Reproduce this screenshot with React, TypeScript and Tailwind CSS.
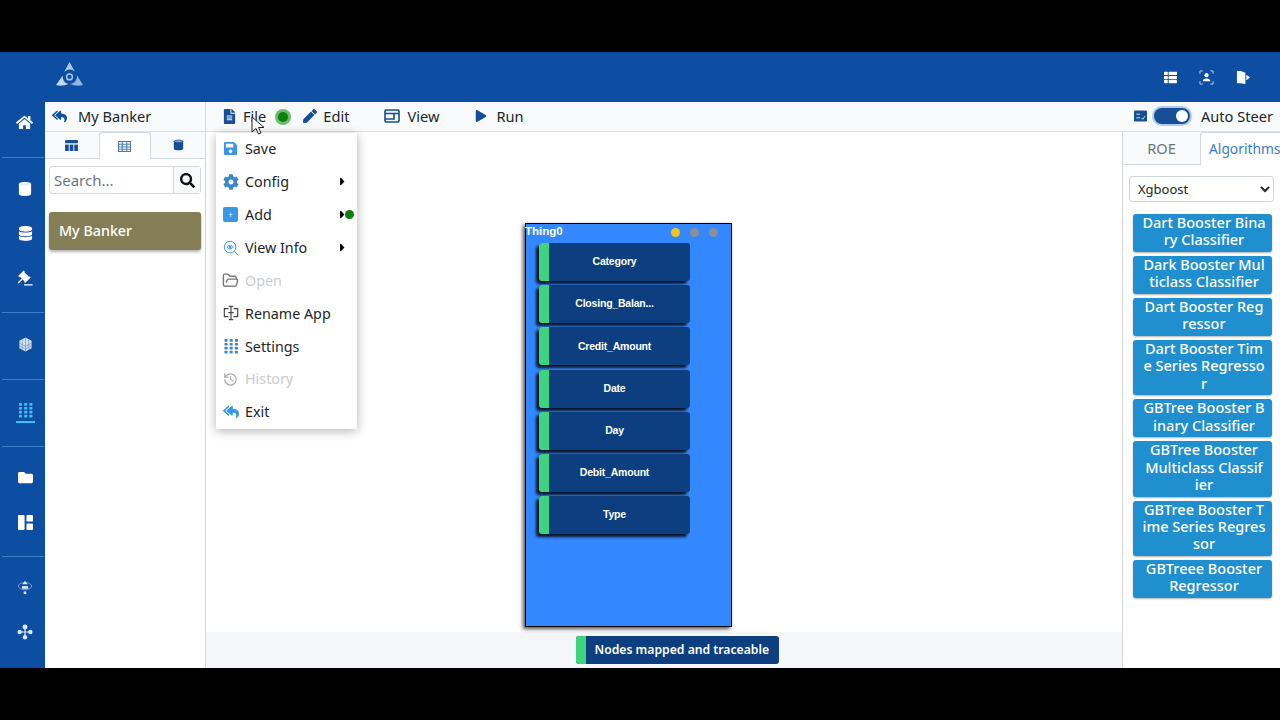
import React from 'react';
import { FaHome, FaDatabase, FaFolder, FaThList, FaFileAlt, FaPen, FaPlay, FaSave, FaCog, FaReplyAll, FaSearch, FaCaretRight } from 'react-icons/fa';
import { BsGrid1X2Fill } from 'react-icons/bs';
import { LuFolderOpen, LuHistory } from 'react-icons/lu';
import { RiAuctionFill } from 'react-icons/ri';

const fields = ['Category', 'Closing_Balan...', 'Credit_Amount', 'Date', 'Day', 'Debit_Amount', 'Type'];

// the wrap points of the reference fall mid word, so lines are listed as they appear
const algorithms = [
  ['Dart Booster Bina', 'ry Classifier'],
  ['Dark Booster Mul', 'ticlass Classifier'],
  ['Dart Booster Reg', 'ressor'],
  ['Dart Booster Tim', 'e Series Regresso', 'r'],
  ['GBTree Booster B', 'inary Classifier'],
  ['GBTree Booster', 'Multiclass Classif', 'ier'],
  ['GBTree Booster T', 'ime Series Regres', 'sor'],
  ['GBTreee Booster', 'Regressor'],
];

const Cylinder = ({ className, top = '#7fa3cf' }: { className?: string; top?: string }) => (
  <svg viewBox="0 0 16 18" className={className} fill="currentColor">
    <path d="M1 3.500C1 1.800 4.200 1 8 1s7 .8 7 2.500v11C15 16.200 11.800 17 8 17s-7-.8-7-2.500z" />
    <ellipse cx="8" cy="3.500" rx="5.500" ry="1.500" fill={top} />
  </svg>
);

const Logo = () => (
  <svg viewBox="0 0 30 26" className="h-[25px] w-[29px]">
    <path d="M15 0 L20.500 10 A7.500 7.500 0 0 0 8 13 Z" fill="#a9c8ea" />
    <path d="M21 11 L29 24 Q22 26 15 22.500 A7 7 0 0 0 21 11 Z" fill="#8fb6e2" />
    <path d="M8 14 A7.500 7.500 0 0 0 14 23 Q7 26 1 24 Z" fill="#c3d9f0" />
    <circle cx="15" cy="15.500" r="3" fill="none" stroke="#a9c8ea" strokeWidth="1.500" />
  </svg>
);

const CubeIcon = () => (
  <svg viewBox="0 0 16 16" className="h-[15px] w-[15px]" fill="#d5dfeb">
    <path d="M8 .5l6.500 3.500v8L8 15.500 1.500 12V4z" />
    <path d="M1.500 6.500L8 10l6.500-3.500M1.500 9.500L8 13l6.500-3.500M4.500 2.500v11M8 1v14M11.500 2.500v11" stroke="#6f8fb8" strokeWidth=".7" fill="none" />
  </svg>
);

const Dots = ({ className }: { className?: string }) => (
  <svg viewBox="0 0 15 15" className={className} fill="currentColor">
    {[0, 1, 2, 3].map(r =>
      [0, 1, 2].map(c => <rect key={`${r}-${c}`} x={c * 5.200 + 1} y={r * 3.900} width="3" height="2.700" rx=".5" />),
    )}
  </svg>
);

const ThreeDotFlow = ({ ring }: { ring?: boolean }) => (
  <svg viewBox="0 0 18 18" className="h-[16px] w-[16px]" fill="#dbe7f5">
    {ring ? (
      <>
        <ellipse cx="9" cy="8" rx="7.500" ry="4" fill="none" stroke="#7fa8d8" strokeWidth="1" />
        <path d="M9 2l3 4H6z" />
        <rect x="5.500" y="8" width="7" height="3" />
        <rect x="7.500" y="14" width="3" height="3" />
      </>
    ) : (
      <>
        <circle cx="9" cy="3.500" r="2.800" />
        <circle cx="3" cy="9" r="2.500" />
        <circle cx="15" cy="9" r="2.500" />
        <circle cx="9" cy="15" r="2.500" />
        <path d="M8.300 4h1.400v10H8.300zM3 8.300h12v1.400H3z" />
      </>
    )}
  </svg>
);

const Add = () => (
  <span className="flex h-[15px] w-[15px] items-center justify-center rounded-[2px] bg-[#3a96e8] text-[8px] leading-none text-white">+</span>
);

const ViewInfo = () => (
  <svg viewBox="0 0 18 18" className="h-[16px] w-[16px]" fill="none" stroke="#3a96e8" strokeWidth="1.100">
    <circle cx="8" cy="8" r="6.500" />
    <path d="M4.500 8c2-2.500 5-2.500 7 0-2 2.500-5 2.500-7 0z" />
    <circle cx="8" cy="8" r="1" fill="#3a96e8" />
    <path d="M12.800 12.800L17 17" />
  </svg>
);

const Rename = () => (
  <svg viewBox="0 0 18 18" className="h-[16px] w-[16px]" fill="none" stroke="#444" strokeWidth="1.300">
    <path d="M6 4H1.500v9H6M12 4h4.500v9H12" />
    <path d="M6.500 1.500h5M6.500 16.500h5M9 1.500v15M6 8.500h6" />
  </svg>
);

const menu = [
  { label: 'Save', icon: <FaSave className="text-[15px] text-[#3a96e8]" /> },
  { label: 'Config', icon: <FaCog className="text-[16px] text-[#3a86cc]" />, arrow: true },
  { label: 'Add', icon: <Add />, arrow: true, dot: true },
  { label: 'View Info', icon: <ViewInfo />, arrow: true },
  { label: 'Open', icon: <LuFolderOpen className="text-[17px] text-[#777]" />, disabled: true },
  { label: 'Rename App', icon: <Rename /> },
  { label: 'Settings', icon: <Dots className="h-[15px] w-[16px] text-[#3a86cc]" /> },
  { label: 'History', icon: <LuHistory className="text-[15px] text-[#aaa]" />, disabled: true },
  { label: 'Exit', icon: <FaReplyAll className="text-[16px] text-[#3a96e8]" /> },
];

const Side = ({ children }: { children: React.ReactNode }) => (
  <div className="flex h-[44.500px] w-full items-center justify-center pl-[5px] text-[15px] text-white">{children}</div>
);

const Rule = () => <div className="ml-[2px] h-px w-[42px] bg-[#3a80c8]" />;

export default function App() {
  return (
    <div className="flex h-[720px] w-[1280px] flex-col overflow-hidden bg-black font-['Noto_Sans',sans-serif] text-[14.600px] text-[#212529]">
      <div className="mt-[52px] flex h-[50px] shrink-0 items-center bg-[#0d4ea3] pb-[5px] pl-[55px] pr-[29px]">
        <Logo />
        <div className="ml-auto flex items-center gap-[22px] pt-[5px] text-white">
          <FaThList className="text-[13px]" />
          <svg viewBox="0 0 16 16" className="h-[15px] w-[15px]" fill="none" stroke="#bcd4ef" strokeWidth="1">
            <path d="M1 4V1h3M12 1h3v3M15 12v3h-3M4 15H1v-3" />
            <circle cx="8" cy="5.500" r="2.200" fill="#fff" stroke="none" />
            <path d="M4 12c0-2 1.500-3 4-3s4 1 4 3z" fill="#fff" stroke="none" />
          </svg>
          <svg viewBox="0 0 16 16" className="h-[15px] w-[15px]" fill="#fff">
            <path d="M1 1h4l5 2v12l-5-1H1z" />
            <path d="M11 5l4 3-4 3z" />
          </svg>
        </div>
      </div>

      <div className="flex h-[566px] shrink-0">
        <div className="flex w-[45px] shrink-0 flex-col bg-[#0d4ea3]">
          <div className="flex h-[55px] items-center justify-center pb-[15px] pl-[3px] text-[17px] text-white"><FaHome /></div>
          <Rule />
          <div className="flex h-[154px] flex-col justify-center pb-[3px]">
            <Side><Cylinder className="h-[16px] w-[14px]" top="#e6eef8" /></Side>
            <Side><FaDatabase /></Side>
            <Side><RiAuctionFill className="-scale-x-100 text-[17px]" /></Side>
          </div>
          <Rule />
          <div className="flex h-[66px] items-center justify-center pb-[4px] pl-[5px]"><CubeIcon /></div>
          <Rule />
          <div className="flex h-[66px] flex-col items-center justify-center pl-[5px]">
            <Dots className="h-[15px] w-[15px] text-[#3fc1f0]" />
            <div className="mt-[3px] h-[2px] w-[19px] bg-[#3fc1f0]" />
          </div>
          <Rule />
          <div className="flex h-[109px] flex-col justify-center pb-[3px]">
            <Side><FaFolder /></Side>
            <Side><BsGrid1X2Fill /></Side>
          </div>
          <Rule />
          <div className="flex flex-col pt-[8px]">
            <Side><ThreeDotFlow ring /></Side>
            <Side><ThreeDotFlow /></Side>
          </div>
        </div>

        <div className="flex w-[161px] shrink-0 flex-col border-r border-[#d5d9dd] bg-white">
          <div className="flex h-[30px] shrink-0 items-center gap-[11px] border-b border-[#dde1e4] bg-[#f8fafc] pl-[7px]">
            <FaReplyAll className="text-[15px] text-[#164f95]" />
            <span>My Banker</span>
          </div>
          <div className="flex h-[27px] shrink-0 border-b border-[#d5d9dd] bg-[#f8fafc]">
            <div className="flex w-[54px] items-center justify-center pr-[2px]">
              <svg viewBox="0 0 14 12" className="h-[11px] w-[13px]" fill="#164f95"><rect width="14" height="3.500" rx=".5" /><rect y="5" width="4" height="7" /><rect x="5" y="5" width="4" height="7" /><rect x="10" y="5" width="4" height="7" /></svg>
            </div>
            <div className="-mb-px flex w-[52px] items-center justify-center rounded-t-[3px] border border-b-0 border-[#d5d9dd] bg-white pr-[2px]">
              <svg viewBox="0 0 14 12" className="h-[11px] w-[13px]" fill="none" stroke="#3b6ea8" strokeWidth="1"><rect x=".5" y=".5" width="13" height="11" /><path d="M.5 3.500h13M.5 6.500h13M.5 9h13M4.500 .5v11M9.500 .5v11" /></svg>
            </div>
            <div className="flex flex-1 items-center justify-center"><Cylinder className="h-[12px] w-[11px] text-[#164f95]" /></div>
          </div>
          <div className="mx-[4px] mt-[7px] flex h-[28px] rounded-[3px] border border-[#d5d9dd]">
            <span className="flex flex-1 items-center pl-[4px] text-[15px] text-[#6c757d]">Search...</span>
            <span className="flex w-[27px] items-center justify-center border-l border-[#d5d9dd] bg-[#f8fafc] text-[15px] text-[#111]"><FaSearch /></span>
          </div>
          <div className="mx-[4px] mt-[18px] flex h-[38px] items-center rounded-[3px] bg-[#857f58] pb-px pl-[10px] text-[14.300px] font-medium text-white shadow-[0_2px_3px_rgba(0,0,0,0.3)]">My Banker</div>
        </div>

        <div className="flex min-w-0 flex-1 flex-col bg-white">
          <div className="flex h-[30px] shrink-0 items-center border-b border-[#dde1e4] bg-[#f8fafc] pl-[16px]">
            <span className="flex items-center gap-[6px]"><FaFileAlt className="text-[15px] text-[#164f95]" />File</span>
            <span className="ml-[9px] h-[16px] w-[16px] rounded-full border-[3px] border-[#6dbb6d] bg-[#0a820a]" />
            <span className="ml-[12px] flex items-center gap-[6px]"><FaPen className="text-[14px] text-[#164f95]" />Edit</span>
            <span className="ml-[35px] flex items-center gap-[7px]">
              <svg viewBox="0 0 16 14" className="h-[14px] w-[16px]" fill="none" stroke="#164f95" strokeWidth="1.600"><rect x="1" y="1" width="14" height="12" rx="1" /><path d="M1 4.500h14M10 4.500V10H1" /></svg>
              View
            </span>
            <span className="ml-[36px] flex items-center gap-[9px]"><FaPlay className="text-[12px] text-[#164f95]" />Run</span>
            <div className="ml-auto flex items-center pr-[7px]">
              <svg viewBox="0 0 14 12" className="mr-[7px] h-[12px] w-[13px]"><rect width="14" height="12" rx="1.500" fill="#164f95" /><path d="M2.500 4h4M2.500 8h4M8 8l1.500 1.500L12 6" stroke="#cfe0f5" strokeWidth="1" fill="none" /></svg>
              <span className="mr-[11px] flex h-[16px] w-[36px] items-center justify-end rounded-full bg-[#164f95] pr-[2px] shadow-[0_0_0_2px_rgba(60,130,220,0.4)]"><span className="h-[12px] w-[12px] rounded-full bg-white" /></span>
              <span>Auto Steer</span>
            </div>
          </div>
          <div className="flex min-h-0 flex-1">
            <div className="relative flex min-w-0 flex-1 flex-col">
              <div className="relative flex-1">
                <div className="absolute left-[319px] top-[91px] h-[404px] w-[207px] border border-black bg-[#3388ff] shadow-[-2px_2px_4px_rgba(0,0,0,0.7)]">
                  <div className="flex h-[16px] items-center justify-between pr-[13px] font-['Liberation_Sans',sans-serif] text-[11.500px] font-bold leading-none text-white">
                    <span className="-ml-px">Thing0</span>
                    <span className="flex gap-[10px]">
                      <span className="h-[9px] w-[9px] rounded-full bg-[#f5c518]" />
                      <span className="h-[9px] w-[9px] rounded-full bg-[#8a8f98]" />
                      <span className="h-[9px] w-[9px] rounded-full bg-[#8a8f98]" />
                    </span>
                  </div>
                  <div className="ml-[13px] mt-[3px] flex w-[151px] flex-col gap-[4.200px]">
                    {fields.map(f => (
                      <div key={f} className="flex h-[38px] overflow-hidden rounded-[3px] bg-[#0d3f80] font-['Liberation_Sans',sans-serif] text-[10.500px] font-bold tracking-[-0.2px] text-white shadow-[-3px_3px_3px_rgba(0,0,0,0.85)]">
                        <span className="w-[10px] bg-[#3fd27f]" />
                        <span className="flex flex-1 items-center justify-center pr-[10px]">{f}</span>
                      </div>
                    ))}
                  </div>
                </div>
                <div className="absolute left-[10px] top-[1px] w-[141px] bg-white text-[14.300px] shadow-[0_2px_10px_rgba(0,0,0,0.3)]">
                  {menu.map(m => (
                    <div key={m.label} className={`relative flex h-[32.900px] items-center pb-px ${m.disabled ? 'text-[#c8ccd0]' : ''}`}>
                      <span className="flex w-[29px] justify-center">{m.icon}</span>
                      {m.label}
                      {m.arrow && <FaCaretRight className="absolute left-[120px] text-[13px] text-black" />}
                      {m.dot && <span className="absolute left-[129px] h-[9px] w-[9px] rounded-full bg-[#0a820a]" />}
                    </div>
                  ))}
                </div>
              </div>
              <div className="flex h-[36px] shrink-0 justify-center bg-[#f4f6f7] pl-[26px] pt-[4px]">
                <div className="flex h-[28px] w-[203px] overflow-hidden rounded-[3px] bg-[#0d3f80] text-[12.200px] font-semibold text-white">
                  <span className="w-[10px] bg-[#3fd27f]" />
                  <span className="flex flex-1 items-center whitespace-nowrap pl-[9px]">Nodes mapped and traceable</span>
                </div>
              </div>
              <svg viewBox="0 0 14 20" className="absolute left-[45px] top-[-16px] h-[20px] w-[14px]">
                <path d="M1 1v15l4-3.500 2.500 5.500 2.500-1-2.500-5.500H13z" fill="#fff" stroke="#222" strokeWidth="1" />
              </svg>
            </div>
            <div className="flex w-[158px] shrink-0 flex-col overflow-hidden border-l border-[#d5d9dd] bg-white">
              <div className="flex h-[33px] shrink-0 border-b border-[#d5d9dd]">
                <div className="flex w-[77px] shrink-0 items-center justify-center bg-[#f8fafc] pt-px text-[#6c757d]">ROE</div>
                <div className="-mb-px flex w-[90px] shrink-0 items-center whitespace-nowrap rounded-t-[3px] border border-b-0 border-[#d5d9dd] bg-white pl-[8px] text-[13.800px] text-[#3a7cc2]">Algorithms</div>
              </div>
              <select className="mx-[6px] mt-[11px] h-[26px] shrink-0 rounded-[3px] border border-[#cfd4d9] bg-white pl-[4px] text-[13px]" defaultValue="Xgboost">
                <option>Xgboost</option>
              </select>
              <div className="ml-[10px] mt-[12px] flex w-[139px] flex-col gap-[4px]">
                {algorithms.map(lines => (
                  <div key={lines.join('')} className="whitespace-nowrap rounded-[3px] bg-[#1f8fd0] pb-[3.400px] pl-[3px] text-center text-[14.500px] font-medium leading-[17.300px] text-white shadow-[0_1px_2px_rgba(0,0,0,0.3)]">
                    {lines.map(l => <div key={l}>{l}</div>)}
                  </div>
                ))}
              </div>
            </div>
          </div>
        </div>
      </div>
    </div>
  );
}
